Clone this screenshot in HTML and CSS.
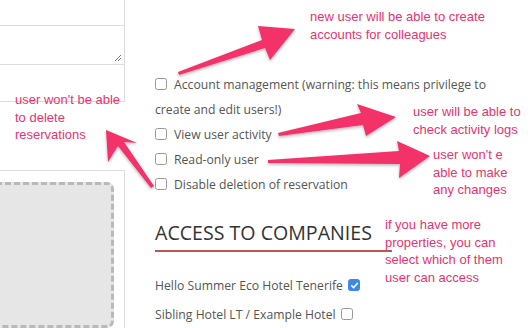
FILE: index.html
```html
<!DOCTYPE html>
<html>
<head>
<meta charset="utf-8">
<link rel="stylesheet" href="styles.css">
</head>
<body>
<div class="page">
  <div class="left">
    <div class="pane pane-top"></div>
    <div class="pane pane-textarea">
      <svg class="grip" width="8" height="8" viewBox="0 0 8 8"><path d="M1 7 L7 1 M4 7 L7 4" stroke="#777" stroke-width="1" fill="none"/></svg>
    </div>
    <div class="pane pane-note"></div>
    <div class="upload">
      <div class="dropzone"></div>
    </div>
  </div>
  <div class="right">
    <div class="opt"><span class="cb"></span>Account management (warning: this means privilege to create and edit users!)</div>
    <div class="opt"><span class="cb"></span>View user activity</div>
    <div class="opt"><span class="cb"></span>Read-only user</div>
    <div class="opt"><span class="cb"></span>Disable deletion of reservation</div>
    <h2 class="heading">ACCESS TO COMPANIES</h2>
    <div class="company">Hello Summer Eco Hotel Tenerife <span class="cb checked"><svg width="9" height="9" viewBox="0 0 9 9"><path d="M1.8 4.8 L3.7 6.6 L7.3 2.4" stroke="#fff" stroke-width="1.6" fill="none" stroke-linecap="round" stroke-linejoin="round"/></svg></span></div>
    <div class="company">Sibling Hotel LT / Example Hotel <span class="cb"></span></div>
  </div>
</div>

<div class="note n1">new user will be able to create<br>accounts for colleagues</div>
<div class="note n2">user won't be able<br>to delete<br>reservations</div>
<div class="note n3">user will be able to<br>check activity logs</div>
<div class="note n4">user won't e<br>able to make<br>any changes</div>
<div class="note n5">if you have more<br>properties, you can<br>select which of them<br>user can access</div>

<svg class="arrows" width="530" height="328" viewBox="0 0 530 328">
  <defs>
    <filter id="sh" x="-20%" y="-20%" width="140%" height="140%">
      <feDropShadow dx="0" dy="1.5" stdDeviation="1.5" flood-color="#000" flood-opacity="0.3"/>
    </filter>
  </defs>
  <g fill="#f3306b" filter="url(#sh)">
    <polygon points="178,72 262,40 258,26 295,29 270,60 265,48 179,75"/>
    <polygon points="278,133 361,113 357,104 396,117 366,136 363,125 279,136"/>
    <polygon points="268,160 399,151 397,141 430,156 399,178 400,164 268,163"/>
    <polygon points="151,188 118,146 108,162 106,130 137,143 124,142 154,186"/>
  </g>
</svg>
</body>
</html>
```

FILE: styles.css
```css
html, body {
  margin: 0;
  padding: 0;
  background: #fff;
}
body {
  width: 530px;
  height: 328px;
  overflow: hidden;
  position: relative;
  font-family: "Open Sans", "Lato", sans-serif;
}
.page {
  display: flex;
  height: 328px;
}
.left {
  width: 125px;
  flex: none;
  display: flex;
  flex-direction: column;
}
.pane {
  border-right: 1px solid #dcdcdc;
  border-bottom: 1px solid #dcdcdc;
  box-sizing: border-box;
  position: relative;
}
.pane-top { height: 35px; }
.pane-textarea { height: 51px; }
.pane-note { height: 50px; }
.grip {
  position: absolute;
  right: 2px;
  bottom: 2px;
}
.upload {
  margin-top: 68px;
  flex: 1;
  border-top: 1px solid #dcdcdc;
  border-right: 1px solid #dcdcdc;
  padding-top: 11px;
  padding-right: 10px;
}
.dropzone {
  margin-left: -20px;
  height: 140px;
  background: #e6e6e6;
  border: 3px dashed #b9b9b9;
  border-radius: 7px;
}
.right {
  padding-left: 30px;
  padding-top: 72px;
  width: 370px;
  box-sizing: border-box;
  flex: none;
}
.opt {
  font-size: 12.2px;
  line-height: 25px;
  color: #555;
  width: 340px;
}
.cb {
  display: inline-block;
  width: 10px;
  height: 10px;
  border: 1px solid #999;
  border-radius: 2.5px;
  vertical-align: -1px;
  margin-right: 7px;
  background: #fff;
  position: relative;
}
.cb.checked {
  background: #3d8ae6;
  border-color: #3d8ae6;
}
.cb svg {
  position: absolute;
  left: 0.5px;
  top: 0.5px;
}
.company .cb {
  margin-right: 0;
  margin-left: 2px;
}
.heading {
  margin: 23px 0 0 0;
  font-weight: 400;
  font-size: 19.6px;
  color: #333;
  line-height: 26px;
  padding-bottom: 4px;
  border-bottom: 2px solid #b9584d;
  width: 237px;
}
.company {
  font-size: 12.2px;
  color: #555;
  line-height: 29px;
}
.heading + .company { margin-top: 19px; }
.note {
  position: absolute;
  font-family: "Liberation Sans", Arial, sans-serif;
  font-size: 13px;
  line-height: 17.5px;
  color: #e8336f;
}
.n1 { left: 310px; top: 8px; }
.n2 { left: 15px; top: 91px; }
.n3 { left: 413px; top: 103px; }
.n4 { left: 433px; top: 146px; }
.n5 { left: 385px; top: 216px; }
.arrows {
  position: absolute;
  left: 0;
  top: 0;
}
```
